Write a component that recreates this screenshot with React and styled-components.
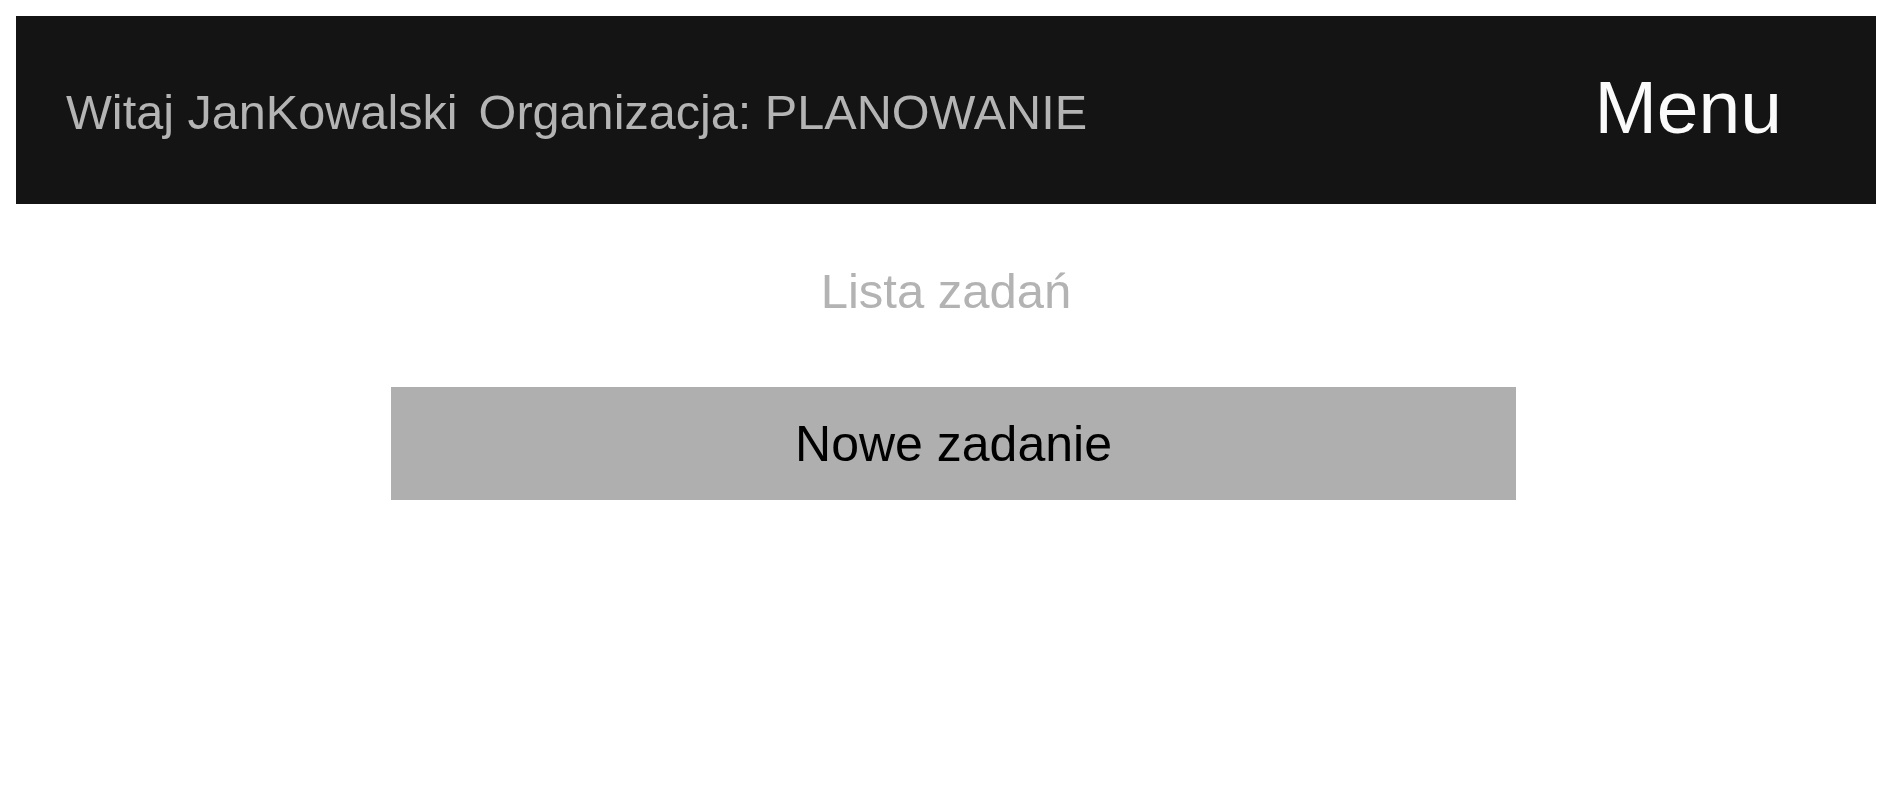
import React from "react";
import styled, { createGlobalStyle } from "styled-components";

const GlobalStyle = createGlobalStyle`
  html, body {
    margin: 0;
    padding: 0;
    background: #ffffff;
    font-family: "Liberation Sans", Arial, sans-serif;
  }
`;

const Page = styled.div`
  padding: 16px 12px 0 16px;
  display: flex;
  flex-direction: column;
`;

const Header = styled.header`
  height: 188px;
  background: #141414;
  display: flex;
  align-items: center;
  justify-content: space-between;
  padding: 0 94px 0 50px;
  box-sizing: border-box;
`;

const Greeting = styled.div`
  display: flex;
  align-items: center;
  padding-top: 4px;
  color: #b4b4b4;
  font-size: 48.6px;
  line-height: 1;
  white-space: nowrap;
`;

const GreetingPart = styled.span`
  margin-left: ${(p) => p.$gap || 0}px;
`;

const MenuButton = styled.div`
  color: #fafafa;
  font-size: 75px;
  line-height: 1;
  padding-bottom: 6px;
  cursor: pointer;
`;

const Main = styled.main`
  display: flex;
  flex-direction: column;
`;

const Title = styled.h1`
  margin: 63px 0 0 0;
  text-align: center;
  font-weight: normal;
  font-size: 49px;
  line-height: 1;
  color: #b3b3b3;
`;

const NewTaskButton = styled.button`
  margin: 71px 0 0 375px;
  width: 1125px;
  height: 113px;
  border: none;
  background: #afafaf;
  color: #000000;
  font-family: "Liberation Sans", Arial, sans-serif;
  font-size: 50px;
  line-height: 1;
  display: flex;
  align-items: center;
  justify-content: center;
  padding: 0;
  cursor: pointer;
`;

export default function App() {
  return (
    <>
      <GlobalStyle />
      <Page>
        <Header>
          <Greeting>
            <GreetingPart>Witaj JanKowalski</GreetingPart>
            <GreetingPart $gap={21}>Organizacja: PLANOWANIE</GreetingPart>
          </Greeting>
          <MenuButton>Menu</MenuButton>
        </Header>
        <Main>
          <Title>Lista zadań</Title>
          <NewTaskButton>Nowe zadanie</NewTaskButton>
        </Main>
      </Page>
    </>
  );
}
